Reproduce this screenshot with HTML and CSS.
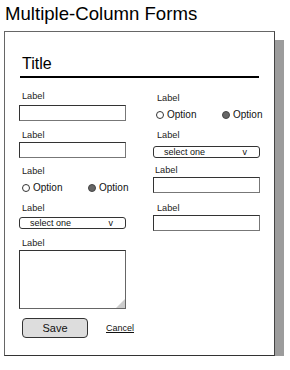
FILE: index.html
```html
<!DOCTYPE html>
<html>
<head>
<meta charset="utf-8">
<link rel="stylesheet" href="styles.css">
</head>
<body>
<h1 class="page-title">Multiple-Column Forms</h1>
<div class="panel">
  <div class="panel-title">Title</div>
  <div class="columns">
    <div class="col col-left">
      <div class="lbl in3 mt13">Label</div>
      <div class="input mt3"></div>
      <div class="lbl in3 mt9">Label</div>
      <div class="input mt1"></div>
      <div class="lbl in3 mt8">Label</div>
      <div class="radios mt5">
        <div class="opt"><span class="dot"></span><span>Option</span></div>
        <div class="opt"><span class="dot on"></span><span>Option</span></div>
      </div>
      <div class="lbl in3 mt9">Label</div>
      <div class="select mt3"><span>select one</span><span class="caret">v</span></div>
      <div class="lbl in3 mt9">Label</div>
      <div class="textarea mt1"></div>
      <div class="actions">
        <button class="btn">Save</button>
        <span class="link">Cancel</span>
      </div>
    </div>
    <div class="col col-right">
      <div class="lbl in4 mt15">Label</div>
      <div class="radios mt5">
        <div class="opt"><span class="dot"></span><span>Option</span></div>
        <div class="opt"><span class="dot on"></span><span>Option</span></div>
      </div>
      <div class="lbl in4 mt9">Label</div>
      <div class="select mt5"><span>select one</span><span class="caret">v</span></div>
      <div class="lbl in2 mt7">Label</div>
      <div class="input mt1"></div>
      <div class="lbl in4 mt10">Label</div>
      <div class="input mt1"></div>
    </div>
  </div>
</div>
</body>
</html>
```

FILE: styles.css
```css
* { box-sizing: border-box; }
body {
  margin: 0;
  background: #fff;
  font-family: "Liberation Sans", Arial, sans-serif;
  color: #111;
}
.page-title {
  margin: 3px 0 0 5px;
  font-size: 18.6px;
  line-height: 21px;
  font-weight: normal;
  color: #000;
}
.panel {
  margin: 7px 0 0 4px;
  width: 271px;
  height: 325px;
  border: 1px solid #666;
  border-right-color: #444;
  border-bottom-color: #333;
  background: #fff;
  box-shadow: 9px 9px 0 #9c9c9c;
}
.panel-title {
  margin: 23px 0 0 15px;
  width: 239px;
  padding: 0 0 3px 2px;
  font-size: 16px;
  line-height: 18px;
  color: #000;
  border-bottom: 2px solid #000;
}
.columns {
  display: flex;
  margin-left: 14px;
}
.col {
  display: flex;
  flex-direction: column;
  width: 107px;
  flex-shrink: 0;
}
.col-right { margin-left: 27px; }
.lbl {
  font-size: 9.2px;
  line-height: 11px;
  color: #222;
}
.in2 { padding-left: 2px; }
.in3 { padding-left: 3px; }
.in4 { padding-left: 4px; }
.mt1 { margin-top: 1px; }
.mt3 { margin-top: 3px; }
.mt5 { margin-top: 5px; }
.mt7 { margin-top: 7px; }
.mt8 { margin-top: 8px; }
.mt9 { margin-top: 9px; }
.mt10 { margin-top: 10px; }
.mt13 { margin-top: 13px; }
.mt15 { margin-top: 15px; }
.input {
  height: 16px;
  border: 1px solid #333;
  border-right-color: #777;
  border-bottom-color: #777;
  background: #fff;
}
.radios {
  display: flex;
  padding-left: 3px;
  height: 12px;
  align-items: center;
  white-space: nowrap;
}
.opt {
  display: flex;
  align-items: center;
  flex: 0 0 66px;
  width: 66px;
  font-size: 10px;
  line-height: 12px;
  color: #111;
}
.dot {
  flex: 0 0 8px;
  width: 8px;
  height: 8px;
  border: 1px solid #333;
  border-radius: 50%;
  background: #fff;
  margin-right: 3px;
}
.dot.on {
  background: #666;
  border-color: #444;
}
.select {
  display: flex;
  justify-content: space-between;
  align-items: center;
  height: 12px;
  padding: 0 12px 0 10px;
  border: 1px solid #333;
  border-radius: 3px;
  font-size: 9px;
  line-height: 10px;
  color: #111;
  background: #fff;
}
.textarea {
  position: relative;
  height: 59px;
  border: 1px solid #333;
  border-right-color: #666;
  border-bottom-color: #666;
  background: #fff;
}
.textarea::after {
  content: "";
  position: absolute;
  right: 0;
  bottom: 0;
  width: 0;
  height: 0;
  border-left: 9px solid transparent;
  border-bottom: 9px solid #ccc;
}
.actions {
  display: flex;
  align-items: center;
  margin-top: 9px;
  padding-left: 3px;
  white-space: nowrap;
}
.btn {
  flex: 0 0 66px;
  width: 66px;
  height: 20px;
  padding: 0;
  border: 1px solid #333;
  border-radius: 4px;
  background: #ddd;
  font-family: "Liberation Sans", Arial, sans-serif;
  font-size: 11px;
  color: #111;
}
.link {
  margin-left: 18px;
  font-size: 9px;
  line-height: 11px;
  color: #111;
  text-decoration: underline;
}
```
